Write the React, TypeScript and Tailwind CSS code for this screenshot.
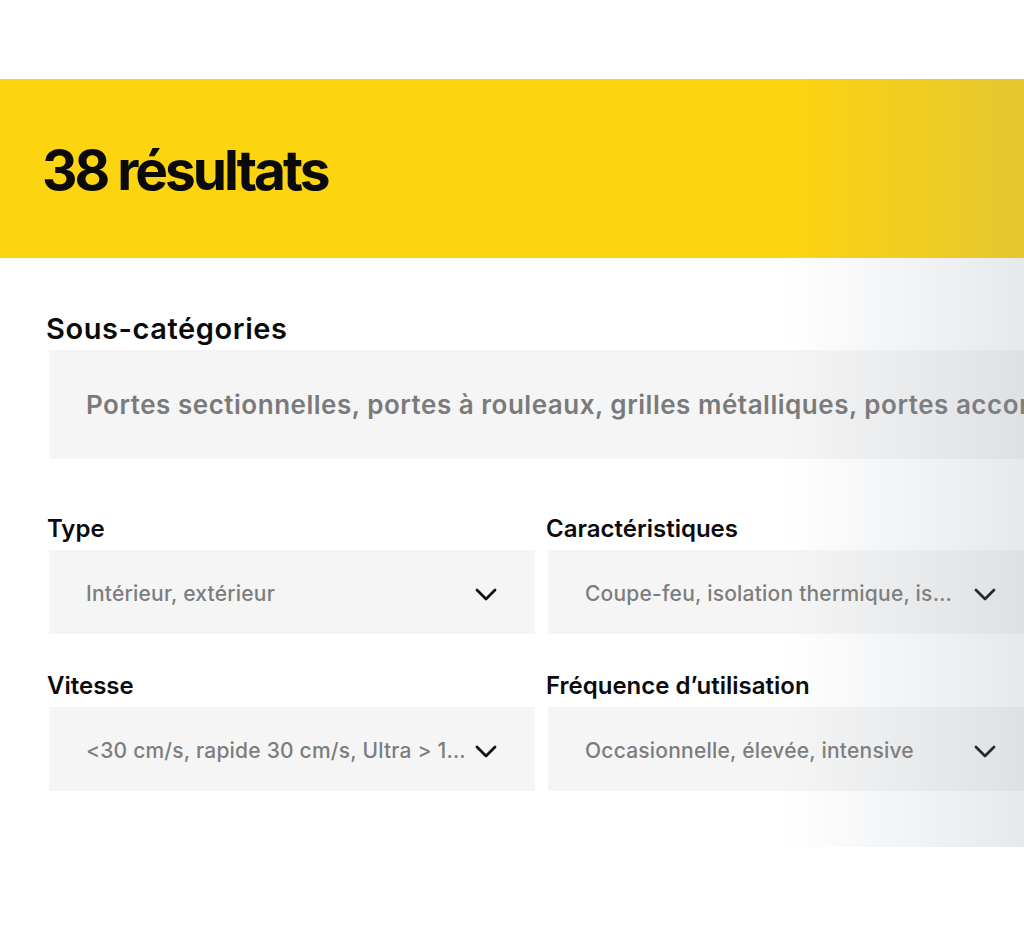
const selects = [
  { label: "Type", value: "Intérieur, extérieur", gap: "gap-[13px]" },
  { label: "Caractéristiques", value: "Coupe-feu, isolation thermique, isolation acoustique", gap: "gap-[13px]" },
  { label: "Vitesse", value: "<30 cm/s, rapide 30 cm/s, Ultra > 100 cm/s", gap: "gap-[4px]" },
  { label: "Fréquence d’utilisation", value: "Occasionnelle, élevée, intensive", gap: "gap-[13px]" },
];

function Chevron() {
  return (
    <svg width="22" height="13" viewBox="0 0 22 13" fill="none" className="shrink-0">
      <path d="M2 2l9 9 9-9" stroke="#111" strokeWidth="2.75" strokeLinecap="round" strokeLinejoin="round" />
    </svg>
  );
}

function SelectField({ label, value, gap }: { label: string; value: string; gap: string }) {
  return (
    <div className="flex flex-col">
      <span className="-ml-[2px] text-[24px] leading-[30px] font-semibold text-[#0b0b0b]">{label}</span>
      <div className={`mt-[6px] flex h-[84px] items-center ${gap} bg-[#f5f5f5] pt-[4px] pl-[37px] pr-[38px]`}>
        <span className="min-w-0 flex-1 truncate text-[21px] font-medium tracking-[0.01em] text-[#7d7d7d]">{value}</span>
        <Chevron />
      </div>
    </div>
  );
}

export default function App() {
  return (
    <div className="min-h-[929px] w-full overflow-hidden bg-white font-['Inter','Liberation_Sans',sans-serif]">
      <div className="h-[79px]" />
      <div className="relative">
        <header className="flex h-[179px] items-center bg-[#fdd410] pl-[42px]">
          <h1 className="mt-[3px] text-[55px] leading-none font-bold tracking-[-0.055em] text-[#0a0a0a]">38 résultats</h1>
        </header>
        <section className="ml-[49px] w-[985px] pt-[53px] pb-[56px]">
          <h2 className="-ml-[3px] text-[29px] leading-[36px] font-semibold tracking-[0.02em] text-[#0b0b0b]">Sous-catégories</h2>
          <div className="mt-[3px] flex h-[109px] w-[1100px] items-center bg-[#f5f5f5] pl-[37px]">
            <span className="whitespace-nowrap text-[26px] font-semibold tracking-[0.02em] text-[#7a7a7a]">
              Portes sectionnelles, portes à rouleaux, grilles métalliques, portes accordéon
            </span>
          </div>
          <div className="mt-[55px] grid grid-cols-2 gap-x-[13px] gap-y-[37px]">
            {selects.map((s) => (
              <SelectField key={s.label} label={s.label} value={s.value} gap={s.gap} />
            ))}
          </div>
        </section>
        <div className="pointer-events-none absolute inset-y-0 right-0 w-[240px] bg-gradient-to-r from-[rgba(137,150,164,0)] to-[rgba(137,150,164,0.21)]" />
      </div>
    </div>
  );
}
